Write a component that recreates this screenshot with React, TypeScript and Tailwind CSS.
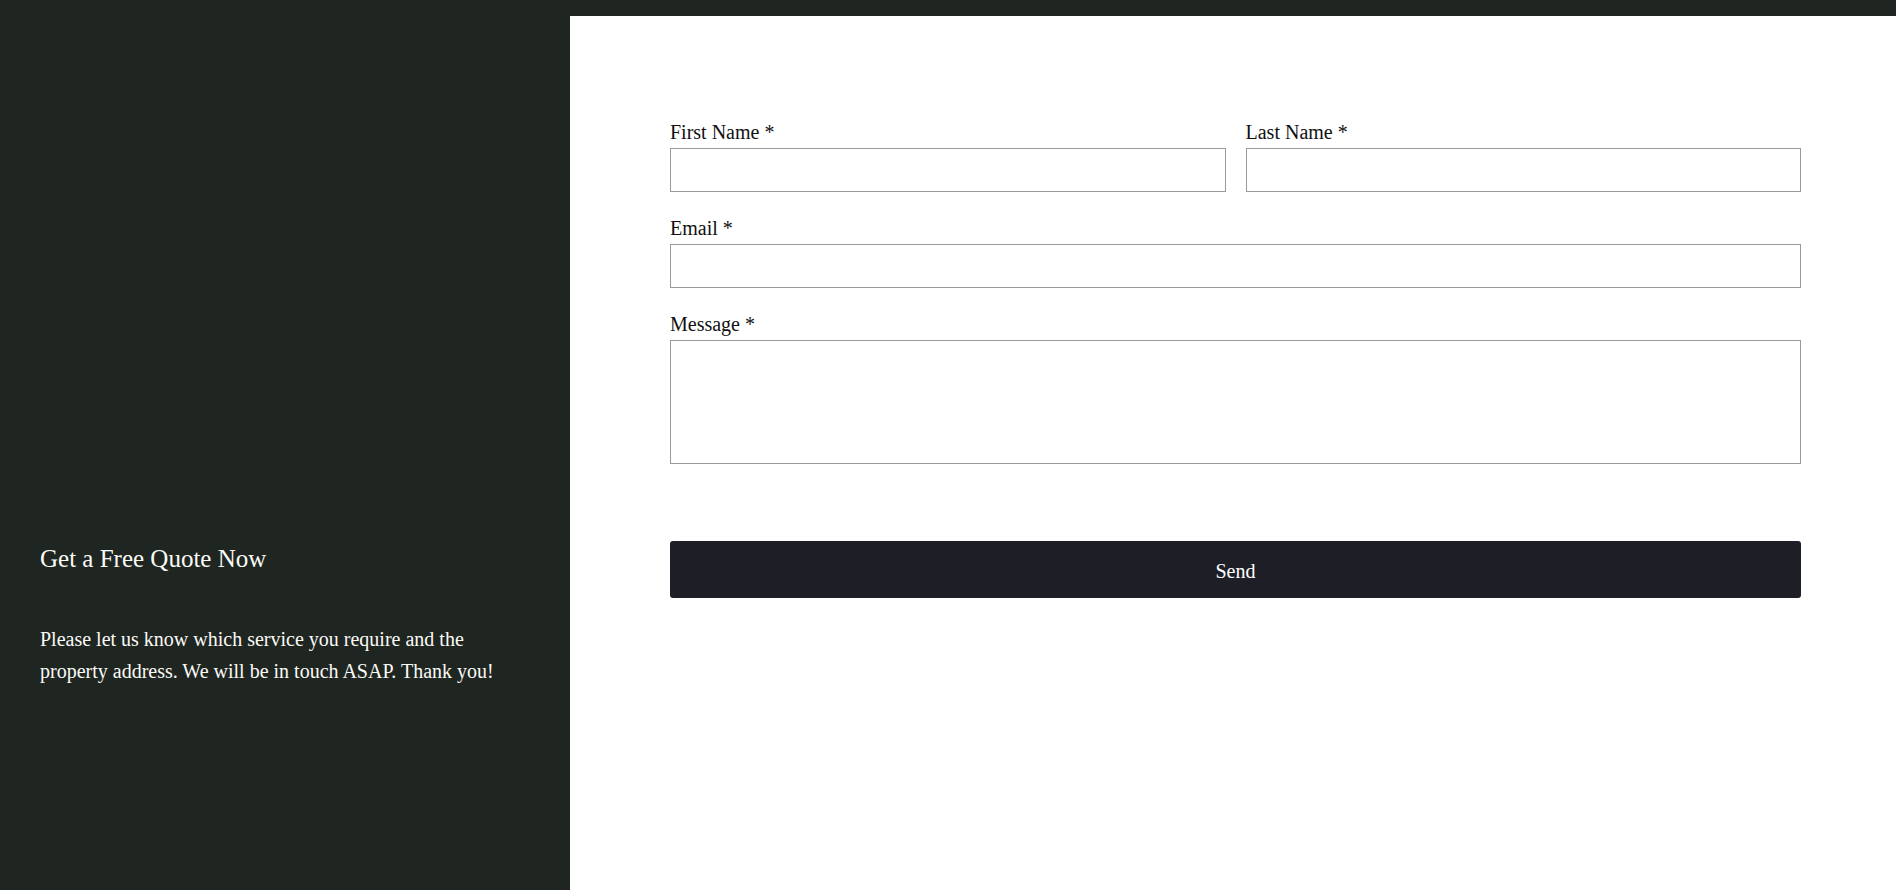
// Quote request page: dark intro column on the left, contact form on a white panel

const serif = 'font-["Liberation_Serif","Times_New_Roman",serif]';

function Field({ label, children }: { label: string; children: React.ReactNode }) {
    return (
        <label className="flex flex-col">
            <span className="mb-1 text-[20px] leading-[24px] text-[#111]">{label}</span>
            {children}
        </label>
    );
}

export default function App() {
    return (
        <div className={`flex h-[890px] w-full overflow-hidden bg-[#1f2521] ${serif}`}>
            {/* Intro column */}
            <aside className="w-[570px] shrink-0 pl-10 pr-[58px] pt-[541px] text-[#fbfbf6]">
                <h2 className="text-[25px] leading-[35px]">Get a Free Quote Now</h2>
                <p className="mt-[47px] text-[20px] leading-[32px]">
                    Please let us know which service you require and the property address. We will be in touch ASAP. Thank you!
                </p>
            </aside>

            {/* Form panel */}
            <main className="mt-4 flex-1 bg-white pl-[100px] pr-[95px] pt-[104px]">
                <form className="flex w-[1131px] flex-col" onSubmit={(e) => e.preventDefault()}>
                    <div className="grid grid-cols-2 gap-x-5">
                        <Field label="First Name *">
                            <input type="text" className="h-[44px] border border-[#9a9a9a] bg-white px-2 outline-none" />
                        </Field>
                        <Field label="Last Name *">
                            <input type="text" className="h-[44px] border border-[#9a9a9a] bg-white px-2 outline-none" />
                        </Field>
                    </div>

                    <div className="mt-6">
                        <Field label="Email *">
                            <input type="email" className="h-[44px] border border-[#9a9a9a] bg-white px-2 outline-none" />
                        </Field>
                    </div>

                    <div className="mt-6">
                        <Field label="Message *">
                            <textarea className="h-[124px] resize-none border border-[#9a9a9a] bg-white px-2 outline-none" />
                        </Field>
                    </div>

                    <button
                        type="submit"
                        className="mt-[77px] h-[57px] rounded-[3px] bg-[#1e1f26] pt-[2px] text-[20px] text-white"
                    >
                        Send
                    </button>
                </form>
            </main>
        </div>
    );
}
